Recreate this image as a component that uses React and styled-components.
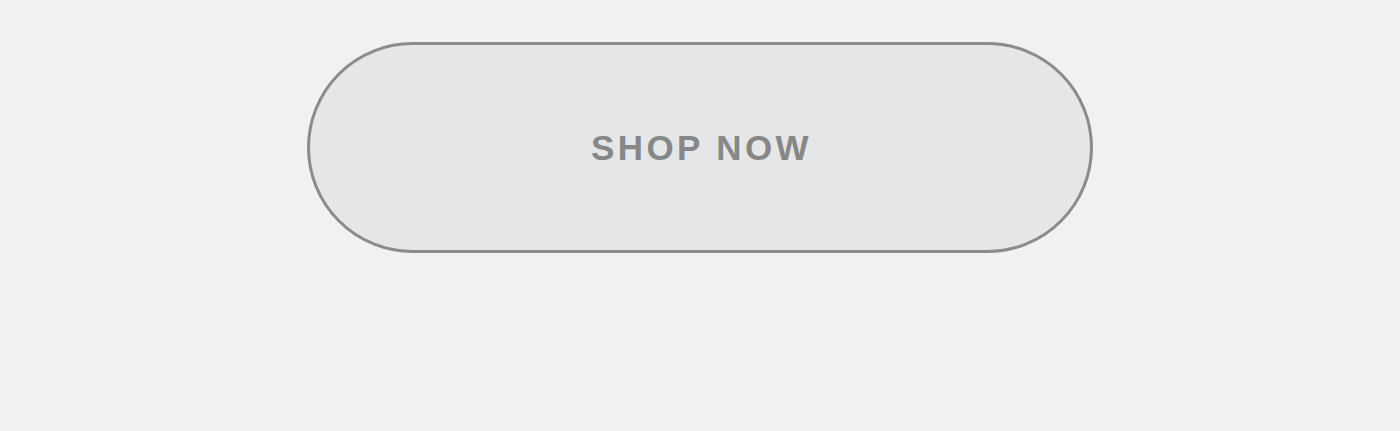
import React from "react";
import styled, { createGlobalStyle } from "styled-components";

const GlobalStyle = createGlobalStyle`
  html, body {
    margin: 0;
    padding: 0;
    background: #f0f1f3;
  }
  body {
    font-family: "Liberation Sans", Arial, sans-serif;
  }
`;

const Page = styled.div`
  min-height: 431px;
  display: flex;
  justify-content: center;
  align-items: flex-start;
  padding-top: 42px;
  box-sizing: border-box;
`;

const ShopButton = styled.button`
  width: 786px;
  height: 211px;
  box-sizing: border-box;
  border: 3px solid #8b8b8b;
  border-radius: 106px;
  background: #e5e6e8;
  display: flex;
  align-items: center;
  justify-content: center;
  padding: 0 0 0 3px;
  cursor: pointer;
  font-family: "Liberation Sans", Arial, sans-serif;
  font-weight: 700;
  font-size: 35px;
  letter-spacing: 3.4px;
  color: #878787;
  text-transform: uppercase;
`;

const App = () => {
  return (
    <>
      <GlobalStyle />
      <Page>
        <ShopButton>Shop now</ShopButton>
      </Page>
    </>
  );
};

export default App;
